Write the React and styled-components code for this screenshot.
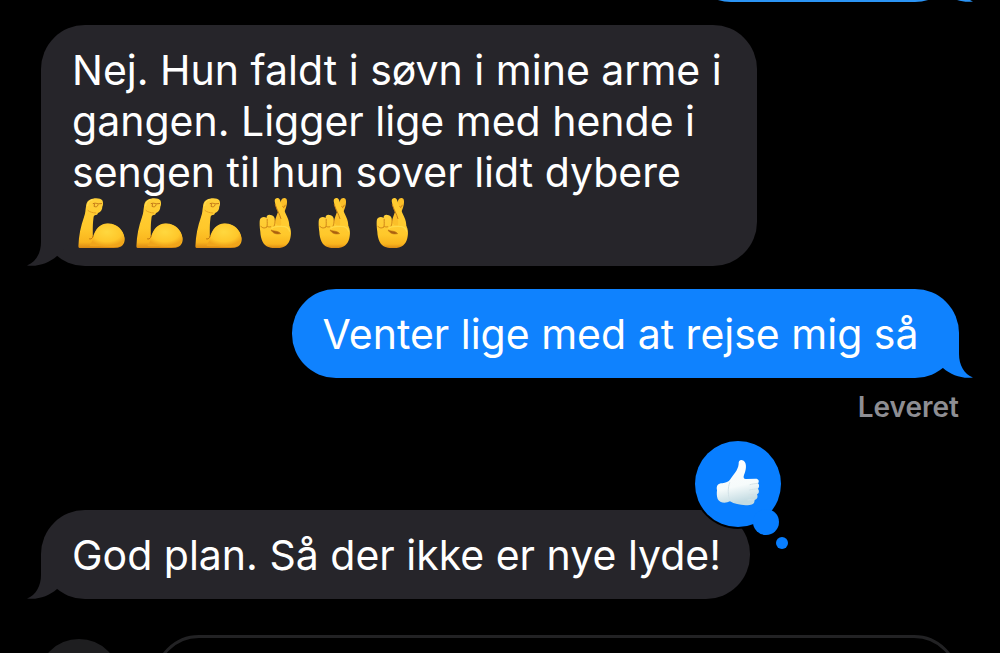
import styled, { createGlobalStyle } from 'styled-components';

const GlobalStyle = createGlobalStyle`
  body {
    margin: 0;
    background: #000;
    overflow: hidden;
  }
`;

const Screen = styled.main`
  display: flex;
  flex-direction: column;
  height: 100vh;
  overflow: hidden;
  box-sizing: border-box;
  padding: 0 41px;
  background: #000;
  color: #fff;
  font-family: Inter, 'Liberation Sans', sans-serif;
`;

const Thread = styled.ol`
  display: flex;
  flex-direction: column;
  flex-shrink: 0;
  gap: 23px;
  list-style: none;
  margin: -87px 0 0;
  padding: 0;
`;

const Message = styled.li`
  display: flex;
  flex-direction: column;
  align-items: ${(props) => (props.$sent ? 'flex-end' : 'flex-start')};
  margin-top: ${(props) => (props.$spaced ? '64px' : '0')};
`;

const Bubble = styled.div`
  position: relative;
  box-sizing: border-box;
  min-width: ${(props) => (props.$earlier ? '272px' : '0')};
  min-height: 89px;
  max-width: 78%;
  padding: 20px 29px 18px 31px;
  border-radius: 44px;
  background: ${(props) => props.$color};
  color: #fff;
`;

const Text = styled.p`
  margin: 0;
  font-size: 41px;
  line-height: 51px;
`;

// The tail hangs outside the rounded corner
const TailShape = styled.svg`
  position: absolute;
  bottom: 0;
  width: 44px;
  height: 44px;
  ${(props) => (props.$sent ? 'right: -14px; transform: scaleX(-1);' : 'left: -14px;')}
`;

const EmojiRow = styled.div`
  display: flex;
  justify-content: space-between;
  width: 342px;
  height: 50px;
  margin-left: 4px;
`;

const Emoji = styled.svg`
  width: 50px;
  height: 50px;
`;

const Reaction = styled.svg`
  position: absolute;
  top: -73px;
  right: -42px;
  width: 100px;
  height: 116px;
`;

const Status = styled.span`
  margin-top: 14px;
  color: #8e8e93;
  font-size: 28px;
  font-weight: 600;
  line-height: 31px;
`;

const Composer = styled.form`
  display: flex;
  flex-shrink: 0;
  align-items: center;
  gap: 34px;
  margin: 36px 0 0 -3px;
`;

const AddButton = styled.button`
  flex-shrink: 0;
  width: 82px;
  height: 82px;
  border: none;
  border-radius: 50%;
  background: #1e1e20;
`;

const MessageInput = styled.input`
  flex: 1;
  min-width: 0;
  box-sizing: border-box;
  height: 90px;
  padding: 0 31px;
  border: 3px solid #222224;
  border-radius: 45px;
  background: #000;
  color: #fff;
  font-family: inherit;
  font-size: 41px;
`;

const GREY = '#26252a';
const BLUE = '#0f82fe';

function Tail({ sent, color }) {
  return (
    <TailShape viewBox="0 0 44 44" $sent={sent} aria-hidden="true">
      <path
        fill={color}
        d="M14 0V20C14 31 9 40 0 43.500C11 45 22 41 30 34L44 20V0Z"
      />
    </TailShape>
  );
}

function EmojiDefs() {
  return (
    <svg width="0" height="0" style={{ display: 'block' }} aria-hidden="true">
      <defs>
        <linearGradient id="skin" x1="0" y1="0" x2="0" y2="1">
          <stop offset="0" stopColor="#ffd03a" />
          <stop offset="0.6" stopColor="#ffc82b" />
          <stop offset="0.88" stopColor="#f9b41d" />
          <stop offset="1" stopColor="#d98713" />
        </linearGradient>
        <radialGradient id="muscle" cx="0.5" cy="0.35" r="0.6">
          <stop offset="0" stopColor="#ffd83f" />
          <stop offset="0.7" stopColor="#ffc72a" />
          <stop offset="1" stopColor="#f0a51a" />
        </radialGradient>
        <linearGradient id="glove" x1="0" y1="0" x2="0.2" y2="1">
          <stop offset="0" stopColor="#ffffff" />
          <stop offset="0.65" stopColor="#f6fbfb" />
          <stop offset="1" stopColor="#c3dbe2" />
        </linearGradient>
      </defs>
    </svg>
  );
}

function Biceps() {
  return (
    <Emoji viewBox="48 33 150 153" role="img" aria-label="💪">
      <path
        fill="url(#skin)"
        d="M57 186Q53 185 54 178C55 148 61 120 71 91C76 79 75 69 77 60C78 46 84 37 98 35C111 32 123 35 127 40C130 45 130 54 127 60C127 69 123 76 114 79L111 84C104 84 100 87 100 94C97 116 98 134 98 154C105 128 121 111 142 111C170 109 192 130 195 155C197 171 189 182 174 185Q140 187 57 186Z"
      />
      <path
        fill="url(#muscle)"
        d="M99 155C107 127 123 112 143 112C170 112 190 131 194 154C195 168 189 178 176 182C148 184 119 182 88 180C91 172 98 165 99 155Z"
      />
      <path d="M87 158C93 159 97 157 99 149" fill="none" stroke="#b96d0d" strokeWidth="3" />
      <path
        d="M99 50C104 48 109 49 114 51L125 50M103 51L102 59C108 61 113 60 114 54"
        fill="none"
        stroke="#c27818"
        strokeWidth="3"
        strokeLinecap="round"
      />
      <path
        d="M83 71C88 76 97 78 107 79"
        fill="none"
        stroke="#e3a021"
        strokeWidth="3"
        strokeLinecap="round"
      />
      <path d="M82 58C82 47 88 40 98 38" fill="none" stroke="#ffe05a" strokeWidth="3" />
    </Emoji>
  );
}

function CrossedFingers() {
  return (
    <Emoji viewBox="34 33 150 153" role="img" aria-label="🤞">
      {/* back finger */}
      <path
        fill="#fbbf29"
        d="M125 40C129 31 140 31 142 38C145 51 139 66 132 82L128 124L104 124C103 104 111 88 116 73C119 61 122 49 125 40Z"
      />
      <path
        fill="url(#skin)"
        d="M61 136C59 122 58 105 60 99C62 90 75 89 80 94C80 84 88 82 96 86C103 88 105 94 106 101C107 110 111 117 119 118L147 116C154 123 156 136 154 149C152 169 140 183 124 185C112 187 98 187 88 184C70 179 62 158 61 136Z"
      />
      {/* front finger */}
      <path
        fill="#ffcb30"
        d="M105 42C105 31 118 31 121 38C127 57 136 74 143 90C148 101 150 110 150 122L124 124C125 112 126 102 122 92C116 78 107 60 105 42Z"
      />
      <path
        d="M107 54C112 70 120 81 124 96M137 55C135 62 132 65 130 59"
        fill="none"
        stroke="#c57b14"
        strokeWidth="3"
        strokeLinecap="round"
      />
      <path
        d="M82 98C82 108 83 117 81 122M106 98C106 107 106 114 103 119M62 119C68 127 77 126 83 120C86 122 90 122 93 121"
        fill="none"
        stroke="#cf8518"
        strokeWidth="3"
        strokeLinecap="round"
      />
      <path d="M95 127C101 119 114 119 127 120C141 120 149 125 151 136" fill="none" stroke="#ffda49" strokeWidth="4" />
      <path
        d="M94 131C102 136 115 132 123 142C112 144 100 143 94 131Z"
        fill="#aa6010"
        stroke="#b76b12"
        strokeWidth="2"
      />
    </Emoji>
  );
}

function ThumbsUp() {
  return (
    <Reaction viewBox="0 0 100 116" role="img" aria-label="👍">
      <circle cx="46" cy="47" r="45" fill="#000" />
      <g fill="#087eff">
        <circle cx="46" cy="47" r="43" />
        <circle cx="74" cy="85" r="13" />
        <circle cx="90" cy="106" r="6" />
      </g>
      <g transform="translate(0 1) scale(0.3333) translate(-67 -21)">
        <path
          fill="url(#glove)"
          d="M142 178C139 164 145 157 158 157C168 155 177 153 182 145C190 132 205 119 207 99C206 87 214 84 222 89C233 98 229 117 223 132C220 140 223 145 230 144L258 143C267 143 270 151 265 157C270 161 269 170 265 173C270 181 268 187 262 190C266 199 262 206 254 207C256 216 250 221 240 222C216 224 196 220 181 211C168 218 149 216 144 204C141 195 141 187 142 178Z"
        />
        <path
          d="M241 161C248 158 257 159 264 157M240 177C248 173 257 176 264 173M237 192C245 189 253 192 261 190M235 207C242 204 248 208 254 207M180 155C174 170 174 195 181 209"
          fill="none"
          stroke="#d3e2e7"
          strokeWidth="3"
          strokeLinecap="round"
        />
      </g>
    </Reaction>
  );
}

export default function App() {
  return (
    <Screen>
      <GlobalStyle />
      <EmojiDefs />
      <Thread>
        <Message $sent>
          <Bubble $color="#2b94f5" $earlier>
            <Tail sent color="#2b94f5" />
          </Bubble>
        </Message>
        <Message>
          <Bubble $color={GREY}>
            <Tail color={GREY} />
            <Text>
              Nej. Hun faldt i søvn i mine arme i gangen. Ligger lige med hende i sengen til hun
              sover lidt dybere
            </Text>
            <EmojiRow>
              <Biceps />
              <Biceps />
              <Biceps />
              <CrossedFingers />
              <CrossedFingers />
              <CrossedFingers />
            </EmojiRow>
          </Bubble>
        </Message>
        <Message $sent>
          <Bubble $color={BLUE}>
            <Tail sent color={BLUE} />
            <Text>Venter lige med at rejse mig så&nbsp;</Text>
          </Bubble>
          <Status>Leveret</Status>
        </Message>
        <Message $spaced>
          <Bubble $color={GREY}>
            <Tail color={GREY} />
            <Text>God plan. Så der ikke er nye lyde!</Text>
            <ThumbsUp />
          </Bubble>
        </Message>
      </Thread>
      <Composer>
        <AddButton type="button" aria-label="Tilføj" />
        <MessageInput type="text" aria-label="Besked" />
      </Composer>
    </Screen>
  );
}
